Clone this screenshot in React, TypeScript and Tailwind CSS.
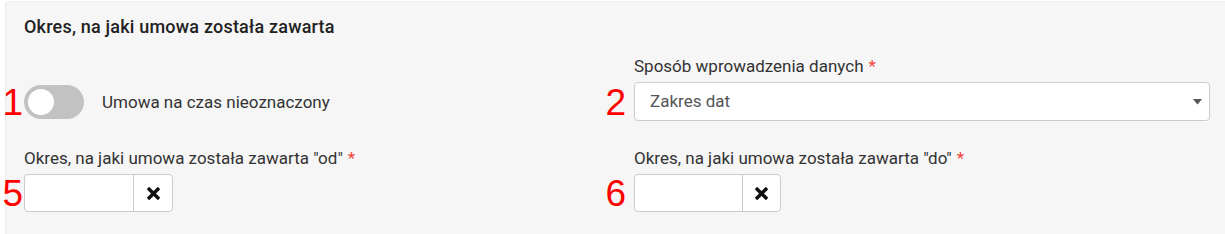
import React from "react";

function Annot({ n, className }: { n: string; className: string }) {
  return (
    <span
      className={
        "pointer-events-none absolute top-1/2 -translate-y-1/2 text-[37px] leading-none text-[#ff0000] " +
        className
      }
      style={{ fontFamily: '"Liberation Sans", Arial, sans-serif' }}
    >
      {n}
    </span>
  );
}

function Times() {
  return (
    <svg width="13" height="13" viewBox="0 0 12 12">
      <path d="M2 2 L10 10 M10 2 L2 10" stroke="#111" strokeWidth="3.2" strokeLinecap="square" />
    </svg>
  );
}

function DateInput({ n, numClass, w, inner }: { n: string; numClass: string; w: string; inner: string }) {
  return (
    <div className={"relative flex h-[38px] " + w}>
      <Annot n={n} className={numClass} />
      <div className="flex h-full w-full overflow-hidden rounded-[4px] border border-[#cccccc] bg-white">
        <div className={inner} />
        <div className="flex flex-1 items-center justify-center border-l border-[#cccccc]">
          <Times />
        </div>
      </div>
    </div>
  );
}

function Req() {
  return <span className="ml-[5px] text-[#f44336]">*</span>;
}

export default function App() {
  return (
    <div
      className="h-[234px] w-[1225px] bg-white pl-[5px] pt-[1px]"
      style={{ fontFamily: 'Roboto, "Liberation Sans", sans-serif' }}
    >
      <div className="h-full rounded-tl-[4px] border-l border-t border-[#ececec] bg-[#f6f6f6] pl-[18px] pr-[15px] pt-[15px] text-[17px] text-[#333333]">
        <h2 className="text-[18px] font-medium leading-[20px] tracking-[0.2px] text-[#222222]">
          Okres, na jaki umowa została zawarta
        </h2>
        <div className="mt-[19px] grid grid-cols-2 gap-x-[34px]">
          <div className="flex items-end">
            <div className="flex h-[39px] items-center">
              <div className="relative">
                <Annot n="1" className="right-[calc(100%+1px)]" />
                <div className="flex h-[34px] w-[60px] items-center rounded-full bg-[#c2c2c2] pl-[4px]">
                  <div className="h-[26px] w-[26px] rounded-full bg-white" />
                </div>
              </div>
              <span className="ml-[18px] leading-[20px]">Umowa na czas nieoznaczony</span>
            </div>
          </div>
          <div>
            <label className="block leading-[20px] text-[#333333]">
              Sposób wprowadzenia danych
              <Req />
            </label>
            <div className="relative mt-[6px]">
              <Annot n="2" className="right-[calc(100%+8px)]" />
              <div className="flex h-[39px] items-center justify-between rounded-[4px] border border-[#cccccc] bg-white pl-[15px] pr-[7px]">
                <span className="text-[17px] text-[#555555]">Zakres dat</span>
                <svg width="9" height="6" viewBox="0 0 9 6">
                  <path d="M0 0 L9 0 L4.5 5.5 Z" fill="#555555" />
                </svg>
              </div>
            </div>
          </div>
          <div className="mt-[27px]">
            <label className="block leading-[20px]">
              Okres, na jaki umowa została zawarta "od"
              <Req />
            </label>
            <div className="mt-[6px]">
              <DateInput n="5" numClass="right-[calc(100%+1px)]" w="w-[149px]" inner="w-[108px]" />
            </div>
          </div>
          <div className="mt-[27px]">
            <label className="block leading-[20px]">
              Okres, na jaki umowa została zawarta "do"
              <Req />
            </label>
            <div className="mt-[6px]">
              <DateInput n="6" numClass="right-[calc(100%+8px)]" w="w-[147px]" inner="w-[107px]" />
            </div>
          </div>
        </div>
      </div>
    </div>
  );
}
